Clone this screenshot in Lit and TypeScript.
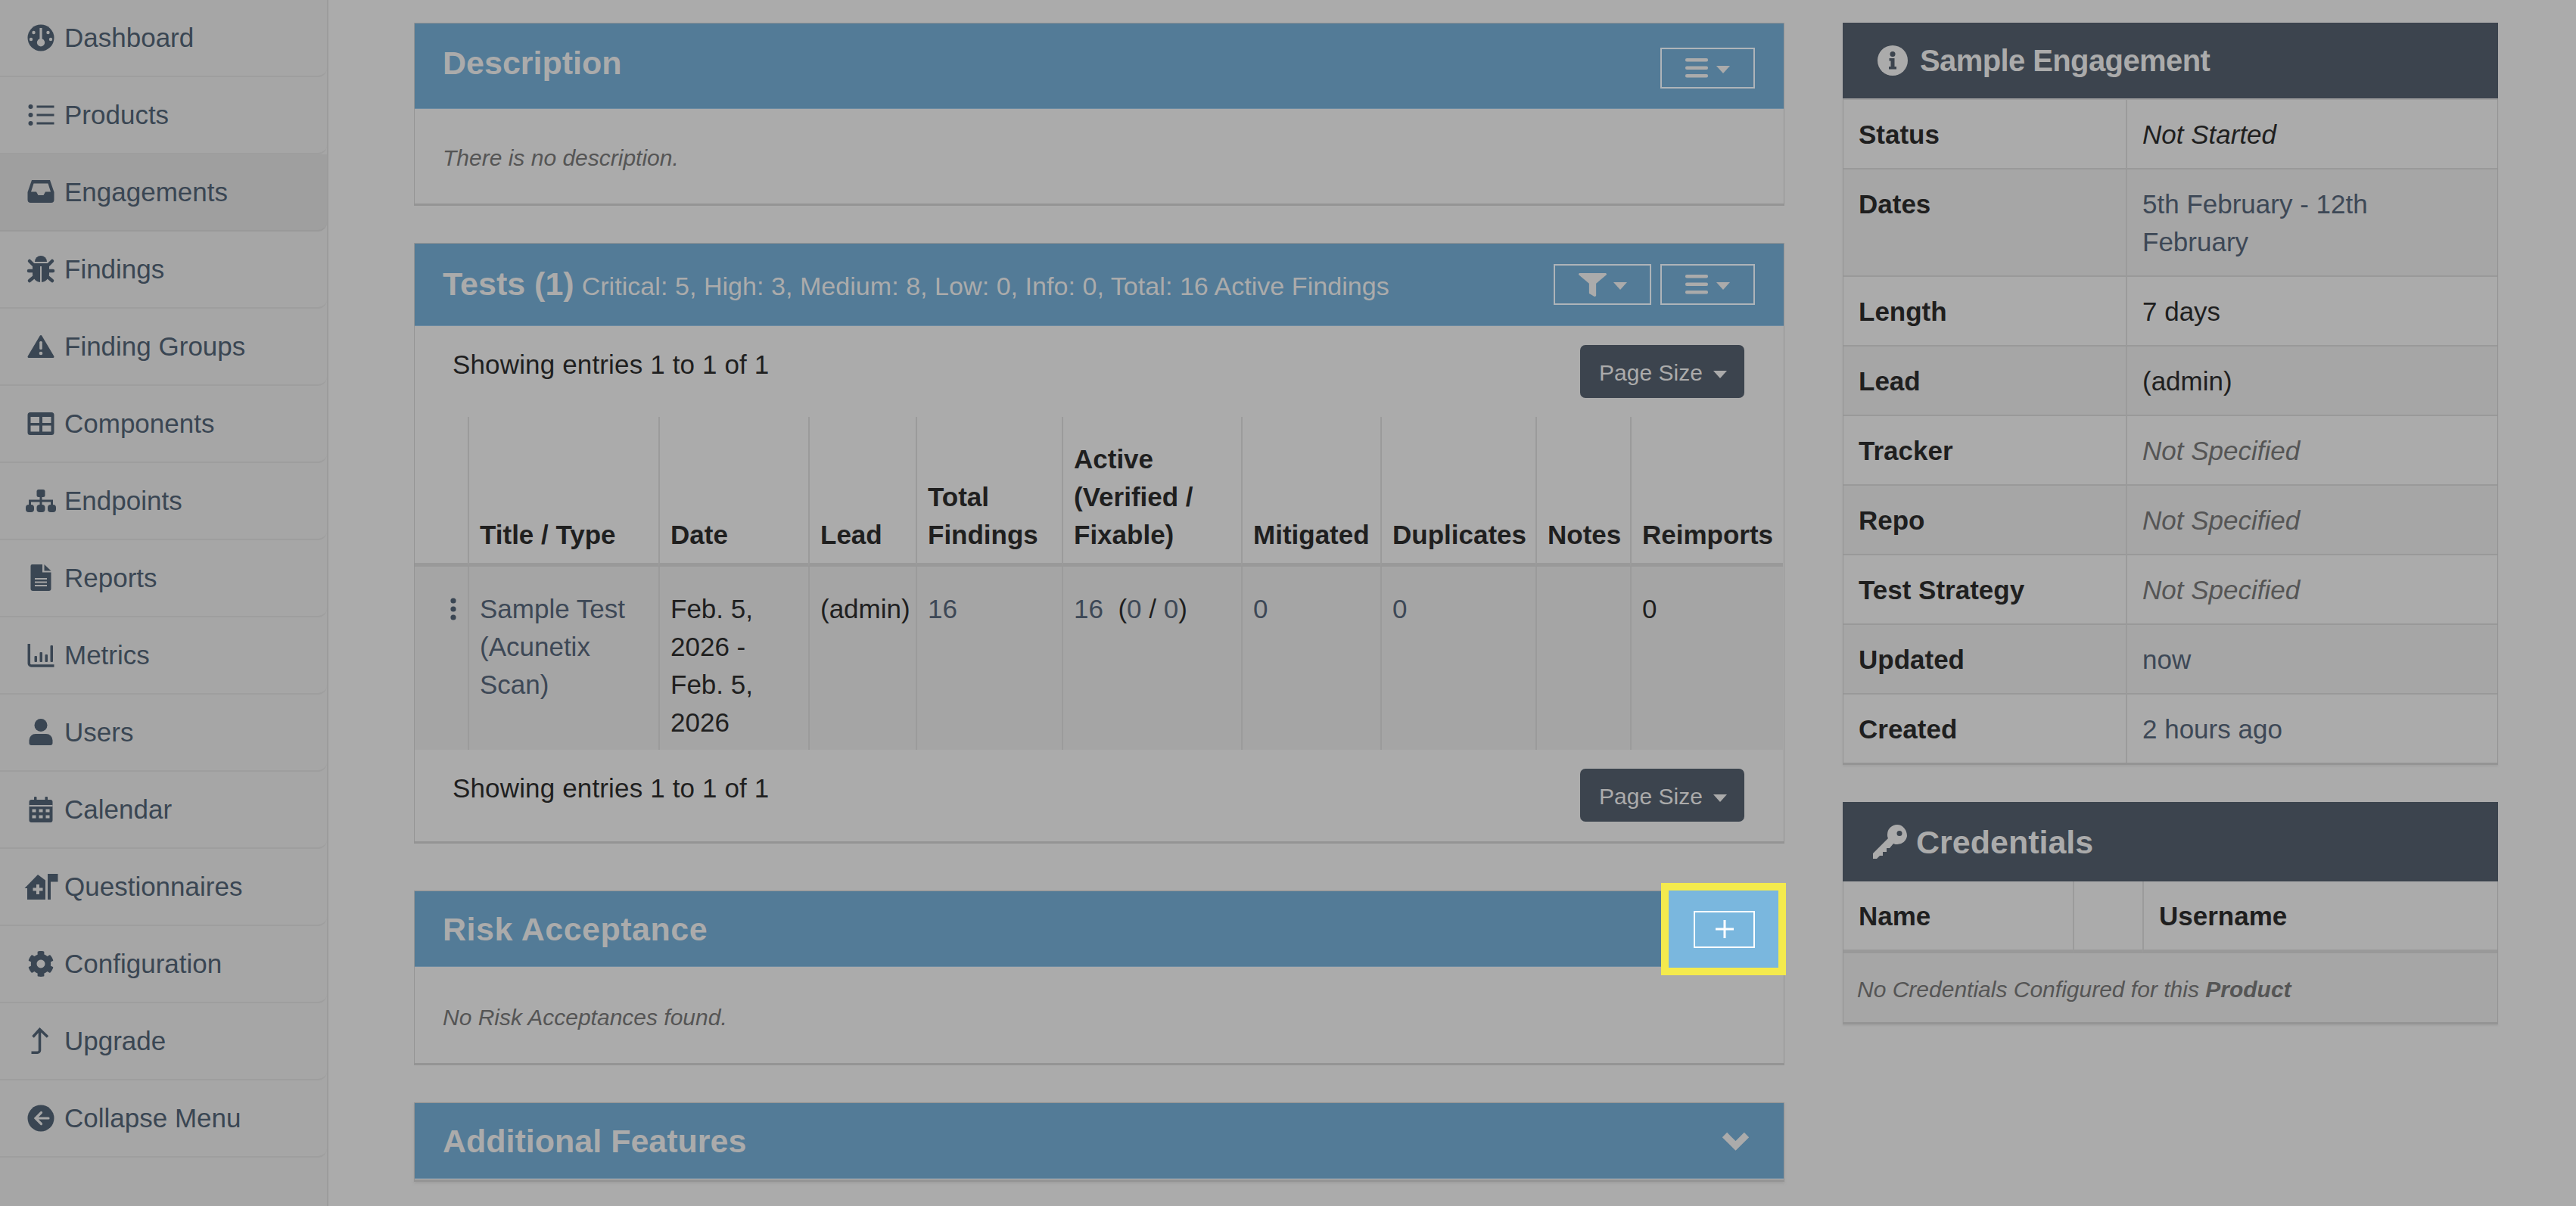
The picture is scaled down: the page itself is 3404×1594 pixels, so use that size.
import { LitElement, html, css, svg } from "lit";
import { customElement } from "lit/decorators.js";

const icons: Record<string, unknown> = {
  Dashboard: svg`<circle cx="22" cy="20" r="17.5"/><path class="h" d="M20.4 7h3.200v14.300a5.200 5.200 0 1 1-3.200 0z"/><circle class="h" cx="12.500" cy="13" r="2.200"/><circle class="h" cx="31.500" cy="13" r="2.200"/><circle class="h" cx="9" cy="22" r="2.200"/><circle class="h" cx="35" cy="22" r="2.200"/>`,
  Products: svg`<circle cx="8.500" cy="9" r="3"/><circle cx="8.500" cy="20" r="3"/><circle cx="8.500" cy="31" r="3"/><rect x="16.500" y="7.500" width="23" height="3"/><rect x="16.500" y="18.500" width="23" height="3"/><rect x="16.500" y="29.500" width="23" height="3"/>`,
  Engagements: svg`<path fill-rule="evenodd" d="M10 4h24l5.500 16v10a4 4 0 0 1-4 4h-27a4 4 0 0 1-4-4V20zM12.500 8.500L9 19.500h7l2.500 4.500h7l2.500-4.500h7L31.500 8.500z"/>`,
  Findings: svg`<path d="M14 10a8 8 0 0 1 16 0z"/><path d="M11 12h22v14a11 11 0 0 1-22 0z"/><rect class="h" x="21" y="16" width="2" height="21"/><path class="s" d="M12 14L7 9M32 14l5-5M12 22H6M32 22h6M13 30l-6 5M31 30l6 5"/>`,
  "Finding Groups": svg`<path stroke="#3a4653" stroke-width="3" stroke-linejoin="round" d="M22 6.500L6 33.500h32z"/><rect class="h" x="20.200" y="13" width="3.600" height="11" rx="1.500"/><circle class="h" cx="22" cy="29" r="2.300"/>`,
  Components: svg`<path fill-rule="evenodd" d="M8 5h28a3.500 3.500 0 0 1 3.500 3.500v23a3.500 3.500 0 0 1-3.500 3.500H8a3.500 3.500 0 0 1-3.500-3.500v-23A3.500 3.500 0 0 1 8 5zM8.500 11v8h11.500v-8zM24 11v8h11.500v-8zM8.500 22.500v8h11.500v-8zM24 22.500v8h11.500v-8z"/>`,
  Endpoints: svg`<rect x="16.500" y="5" width="11" height="10" rx="2.500"/><rect x="2" y="25" width="11" height="10" rx="4"/><rect x="16.500" y="25" width="11" height="10" rx="4"/><rect x="31" y="25" width="11" height="10" rx="4"/><path class="t" d="M22 15v10M7.500 25v-5h29v5"/>`,
  Reports: svg`<path d="M8.500 4a2 2 0 0 1 2-2H24v10.500h11.500V34a3 3 0 0 1-3 3h-21a3 3 0 0 1-3-3z"/><path d="M26.500 2l9 8.500h-9z"/><rect class="h" x="14" y="20" width="16" height="2"/><rect class="h" x="14" y="24.500" width="16" height="2"/><rect class="h" x="14" y="29" width="16" height="2"/>`,
  Metrics: svg`<path class="t w" d="M6.300 5v26a3 3 0 0 0 3 3h30.200"/><rect x="13.500" y="21" width="3.500" height="8" rx="1"/><rect x="20.500" y="16" width="3.500" height="13" rx="1"/><rect x="27.500" y="19" width="3.500" height="10" rx="1"/><rect x="34.500" y="7" width="3.500" height="22" rx="1"/>`,
  Users: svg`<circle cx="22" cy="10.500" r="8.500"/><path d="M15 22h14a8.500 8.500 0 0 1 8.500 8.500v3.500a3 3 0 0 1-3 3h-25a3 3 0 0 1-3-3v-3.500A8.500 8.500 0 0 1 15 22z"/>`,
  Calendar: svg`<path d="M9.500 7h25a3 3 0 0 1 3 3v24a3 3 0 0 1-3 3h-25a3 3 0 0 1-3-3V10a3 3 0 0 1 3-3z"/><rect x="13" y="3" width="3.500" height="7" rx="1"/><rect x="27.500" y="3" width="3.500" height="7" rx="1"/><rect class="h" x="6.500" y="14" width="31" height="2"/><g class="h"><rect x="10.500" y="19.500" width="5" height="4"/><rect x="19.500" y="19.500" width="5" height="4"/><rect x="28.500" y="19.500" width="5" height="4"/><rect x="10.500" y="27.500" width="5" height="4"/><rect x="19.500" y="27.500" width="5" height="4"/><rect x="28.500" y="27.500" width="5" height="4"/></g>`,
  Questionnaires: svg`<path d="M.5 22L18 4l10 7.500V37H4V22z"/><path class="h" d="M16 17h4v4.500h4.500v4H20V30h-4v-4.500h-4.500v-4H16z"/><rect x="31" y="3" width="4" height="34"/><rect x="31" y="3" width="13.500" height="10.500"/>`,
  Configuration: svg`<svg x="4.500" y="2.500" width="35" height="35" viewBox="0 0 512 512"><path d="M487.400 315.700l-42.600-24.600c4.300-23.200 4.300-47 0-70.200l42.600-24.600c4.900-2.800 7.100-8.600 5.500-14-11.100-35.600-30-67.800-54.700-94.600-3.800-4.100-10-5.100-14.800-2.300L380.800 110c-17.900-15.400-38.500-27.300-60.800-35.100V25.800c0-5.600-3.900-10.500-9.400-11.700-36.700-8.200-74.300-7.800-109.200 0-5.500 1.200-9.400 6.100-9.400 11.700V75c-22.200 7.900-42.800 19.800-60.800 35.100L88.700 85.500c-4.900-2.800-11-1.900-14.800 2.300-24.700 26.700-43.600 58.900-54.700 94.600-1.700 5.400.6 11.200 5.500 14L67.300 221c-4.300 23.200-4.300 47 0 70.200l-42.600 24.600c-4.900 2.800-7.100 8.600-5.500 14 11.100 35.600 30 67.800 54.700 94.600 3.800 4.100 10 5.100 14.800 2.300l42.600-24.600c17.900 15.400 38.500 27.300 60.800 35.100v49.200c0 5.600 3.900 10.500 9.400 11.700 36.700 8.200 74.300 7.800 109.200 0 5.500-1.200 9.400-6.100 9.400-11.700v-49.200c22.200-7.900 42.800-19.800 60.800-35.100l42.600 24.600c4.900 2.800 11 1.900 14.800-2.300 24.700-26.700 43.600-58.900 54.700-94.600 1.500-5.500-.7-11.300-5.600-14.100zM256 336c-44.100 0-80-35.900-80-80s35.900-80 80-80 80 35.900 80 80-35.900 80-80 80z"/></svg>`,
  Upgrade: svg`<path class="t w" d="M9.500 35.200h8a3 3 0 0 0 3-3V5M11.500 14.500L20.500 4.500l10.500 10"/>`,
  "Collapse Menu": svg`<circle cx="22" cy="20" r="17.500"/><path class="th" d="M32 20H15.500M22.500 12.500L15 20l7.500 7.500"/>`,
};

const items = Object.keys(icons);

@customElement("app-root")
export class AppRoot extends LitElement {
  static styles = css`
    :host {
      display: grid;
      grid-template-columns: 434px 1fr;
      width: 3404px;
      height: 1594px;
      overflow: hidden;
      background: #ababab;
      font-family: "Liberation Sans", Arial, sans-serif;
      font-size: 35px;
      line-height: 50px;
      color: #1f1f1f;
    }
    .side {
      background: #a6a6a6;
      border-right: 2px solid #9c9c9c;
      box-sizing: border-box;
      height: 1594px;
    }
    .item {
      display: flex;
      align-items: center;
      height: 102px;
      box-sizing: border-box;
      padding-left: 32px;
      border-bottom: 2px solid #9e9e9e;
      border-bottom-right-radius: 12px;
      color: #3a4653;
    }
    .item.on { background: #9f9f9f; border-bottom-color: #999; }
    .item svg { flex: none; margin-right: 9px; overflow: visible; }
    .ic { fill: #3a4653; }
    .ic .h { fill: #a6a6a6; }
    .on .ic .h { fill: #9f9f9f; }
    .ic .s { fill: none; stroke: #3a4653; stroke-width: 4.5; stroke-linecap: round; }
    .ic .t { fill: none; stroke: #3a4653; stroke-width: 3; }
    .ic .t.w { stroke-width: 3.500; }
    .ic .th { fill: none; stroke: #a6a6a6; stroke-width: 3.200; stroke-linecap: round; }

    .main {
      display: grid;
      grid-template-columns: 1811px 866px;
      column-gap: 77px;
      padding: 30px 0 0 113px;
      align-items: start;
    }
    .col { display: flex; flex-direction: column; }

    .panel {
      border: 1px solid #949494;
      border-width: 1px 1px 3px 1px;
      box-sizing: border-box;
    }
    .p1 { height: 242px; }
    .p2 { height: 794px; margin-top: 49px; }
    .p3 { height: 231px; margin-top: 62px; }
    .p4 { height: 105px; margin-top: 49px; box-shadow: 0 2px 3px #9f9f9f; }

    .head {
      display: flex;
      align-items: center;
      background: #537b97;
      border-bottom: 1.5px solid #6a8aa2;
      box-sizing: border-box;
      padding: 0 38px 0 37px;
      color: #ababab;
      position: relative;
    }
    .p1 .head { height: 113px; }
    .p2 .head { height: 109px; }
    .p3 .head, .p4 .head { height: 100px; }
    .title { font-size: 43px; font-weight: bold; white-space: nowrap; }
    .p1 .title { margin-bottom: 9px; }
    .p1 .btns { margin-top: 6px; }
    .p3 .title { letter-spacing: 0.5px; }
    .sub { font-size: 34px; font-weight: normal; margin-left: 10px; letter-spacing: 0.05px; }
    .btns { margin-left: auto; display: flex; gap: 12px; }
    .btn {
      display: flex;
      align-items: center;
      justify-content: center;
      gap: 11px;
      box-sizing: border-box;
      height: 54px;
      width: 125px;
      border: 2px solid #aeb4b9;
      color: #ababab;
      fill: #ababab;
    }
    .btn.f { width: 129px; gap: 9px; }
    .caret {
      width: 0;
      height: 0;
      border-top: 10px solid currentColor;
      border-left: 9.5px solid transparent;
      border-right: 9.5px solid transparent;
      margin-top: 4px;
    }
    .note { font-size: 30px; font-style: italic; color: #555; padding: 42px 37px 0; line-height: 50px; }
    .p1 .note { padding-top: 40px; }

    .bar { display: flex; justify-content: space-between; align-items: flex-start; padding: 25px 52px 25px 50px; }
    .bar .txt { margin-top: 1px; letter-spacing: 0.15px; }
    .ps {
      display: flex;
      align-items: center;
      justify-content: center;
      gap: 14px;
      box-sizing: border-box;
      width: 217px;
      height: 70px;
      padding: 3px 0 0 2px;
      border-radius: 7px;
      background: #3c444e;
      color: #ababab;
      font-size: 30px;
    }

    table { border-collapse: separate; border-spacing: 0; table-layout: fixed; }
    .tests { width: 1808px; }
    .tests th {
      height: 198px;
      box-sizing: border-box;
      vertical-align: bottom;
      text-align: left;
      padding: 0 4px 12px 14px;
      border-left: 2px solid #9b9b9b;
      border-bottom: 5px solid #999;
    }
    .tests td {
      vertical-align: top;
      padding: 31px 4px 11px 14px;
      border-left: 2px solid #9b9b9b;
      background: #a5a5a5;
    }
    .tests th:first-child, .tests td:first-child { border-left: 0; padding: 0; }
    .dots { display: block; margin: 41px 0 0 47px; fill: #3a4653; }
    .a { color: #3d4856; }

    .dark { background: #3c444e; color: #ababab; display: flex; align-items: center; box-sizing: border-box; }
    .d1 { height: 100px; padding-left: 46px; gap: 16px; }
    .d1 span { font-size: 40px; font-weight: bold; letter-spacing: -0.6px; }
    .d2 { height: 105px; padding-left: 40px; gap: 12px; margin-top: 49px; }
    .d2 span { font-size: 43px; font-weight: bold; }
    .box { border: 1px solid #949494; border-top: 0; border-bottom-width: 3px; box-shadow: 0 2px 2px #a2a2a2; }
    .info { width: 100%; box-sizing: border-box; border-top: 2px solid #9d9d9d; }
    .info th, .info td {
      text-align: left;
      vertical-align: top;
      padding: 21px 20px 19px 20px;
      border-bottom: 2px solid #999;
      font-weight: normal;
    }
    .info tr:last-child th, .info tr:last-child td { border-bottom: 0; }
    .info th { font-weight: bold; }
    .info td { border-left: 2px solid #9b9b9b; }
    .info tr:nth-child(odd) th, .info tr:nth-child(odd) td { background: #a6a6a6; }
    .ns { color: #555; font-style: italic; }
    .ni { font-style: italic; }
    .cred { width: 100%; }
    .cred th {
      text-align: left;
      padding: 21px 20px 19px;
      height: 90px;
      box-sizing: border-box;
      border-left: 2px solid #9b9b9b;
      border-bottom: 5px solid #999;
    }
    .cred th:first-child { border-left: 0; }
    .cred td { font-size: 30px; font-style: italic; color: #555; padding: 23px 18px 18px; background: #a6a6a6; }

    .spot {
      position: absolute;
      top: -11px;
      right: -3px;
      width: 165px;
      height: 122px;
      box-sizing: border-box;
      border: 10px solid #f4ea4d;
      background: #7ab7de;
      display: flex;
      align-items: center;
      justify-content: center;
    }
    .plus {
      width: 81px;
      height: 49px;
      margin-left: 2px;
      box-sizing: border-box;
      border: 2px solid #fff;
      display: flex;
      align-items: center;
      justify-content: center;
    }
    .chev { margin-left: auto; margin-right: 5px; }
  `;

  private bars() {
    return html`<svg width="30" height="26" viewBox="0 0 30 26"><rect width="30" height="4.500" rx="2"/><rect y="10.500" width="30" height="4.500" rx="2"/><rect y="21" width="30" height="4.500" rx="2"/></svg><span class="caret"></span>`;
  }

  private bar() {
    return html`<div class="bar"><div class="txt">Showing entries 1 to 1 of 1</div><div class="ps">Page Size <span class="caret"></span></div></div>`;
  }

  render() {
    const cols = [70, 252, 198, 142, 193, 237, 184, 205, 125, 202];
    const rows: [string, unknown][] = [
      ["Status", html`<span class="ni">Not Started</span>`],
      ["Dates", html`<span class="a">5th February - 12th<br />February</span>`],
      ["Length", "7 days"],
      ["Lead", "(admin)"],
      ["Tracker", html`<span class="ns">Not Specified</span>`],
      ["Repo", html`<span class="ns">Not Specified</span>`],
      ["Test Strategy", html`<span class="ns">Not Specified</span>`],
      ["Updated", html`<span class="a">now</span>`],
      ["Created", html`<span class="a">2 hours ago</span>`],
    ];
    return html`
      <nav class="side">
        ${items.map(
          (n) => html`<div class="item ${n === "Engagements" ? "on" : ""}">
            <svg class="ic" width="44" height="40" viewBox="0 0 44 40">${icons[n]}</svg>${n}
          </div>`
        )}
      </nav>
      <main class="main">
        <div class="col">
          <section class="panel p1">
            <div class="head"><div class="title">Description</div><div class="btns"><div class="btn">${this.bars()}</div></div></div>
            <div class="note">There is no description.</div>
          </section>
          <section class="panel p2">
            <div class="head">
              <div class="title">Tests (1)<span class="sub">Critical: 5, High: 3, Medium: 8, Low: 0, Info: 0, Total: 16 Active Findings</span></div>
              <div class="btns">
                <div class="btn f">
                  <svg width="37" height="31" viewBox="0 0 512 512" preserveAspectRatio="none"><path d="M487.976 0H24.028C2.71 0-8.047 25.866 7.058 40.971L192 225.941V432c0 7.831 3.821 15.17 10.237 19.662l80 55.98C298.02 518.69 320 507.493 320 487.98V225.941l184.947-184.97C520.021 25.896 509.338 0 487.976 0z"/></svg><span class="caret"></span>
                </div>
                <div class="btn">${this.bars()}</div>
              </div>
            </div>
            ${this.bar()}
            <table class="tests">
              <colgroup>${cols.map((w) => html`<col style="width:${w}px" />`)}</colgroup>
              <thead><tr>
                <th></th><th>Title / Type</th><th>Date</th><th>Lead</th><th>Total Findings</th><th>Active (Verified / Fixable)</th><th>Mitigated</th><th>Duplicates</th><th>Notes</th><th>Reimports</th>
              </tr></thead>
              <tbody><tr>
                <td><svg class="dots" width="8" height="30" viewBox="0 0 8 30"><circle cx="4" cy="4" r="3.600"/><circle cx="4" cy="15" r="3.600"/><circle cx="4" cy="26" r="3.600"/></svg></td>
                <td><span class="a">Sample Test<br />(Acunetix<br />Scan)</span></td>
                <td>Feb. 5,<br />2026 -<br />Feb. 5,<br />2026</td>
                <td>(admin)</td>
                <td><span class="a">16</span></td>
                <td><span class="a">16</span>&nbsp; (<span class="a">0</span> / <span class="a">0</span>)</td>
                <td><span class="a">0</span></td>
                <td><span class="a">0</span></td>
                <td></td>
                <td>0</td>
              </tr></tbody>
            </table>
            ${this.bar()}
          </section>
          <section class="panel p3">
            <div class="head">
              <div class="title">Risk Acceptance</div>
              <div class="spot"><div class="plus"><svg width="24" height="24" viewBox="0 0 24 24"><path d="M0 12h24M12 0v24" stroke="#fff" stroke-width="3" fill="none"/></svg></div></div>
            </div>
            <div class="note">No Risk Acceptances found.</div>
          </section>
          <section class="panel p4">
            <div class="head">
              <div class="title">Additional Features</div>
              <svg class="chev" width="41" height="28" viewBox="0 0 41 28"><path d="M6 6l14.500 14.500L35 6" fill="none" stroke="#ababab" stroke-width="9"/></svg>
            </div>
          </section>
        </div>
        <div class="col">
          <div class="dark d1">
            <svg width="40" height="40" viewBox="0 0 40 40"><path fill="#ababab" d="M20 0a20 20 0 1 1 0 40a20 20 0 0 1 0-40z"/><circle cx="20" cy="11.500" r="3.500" fill="#3c444e"/><path fill="#3c444e" d="M15.500 17h7v11h2.500v3.500H15V28h2.500v-7.500h-2z"/></svg>
            <span>Sample Engagement</span>
          </div>
          <div class="box">
            <table class="info">
              <colgroup><col style="width:373px" /><col /></colgroup>
              ${rows.map(([k, v]) => html`<tr><th>${k}</th><td>${v}</td></tr>`)}
            </table>
          </div>
          <div class="dark d2">
            <svg width="45" height="45" viewBox="0 0 45 45"><path fill="#ababab" fill-rule="evenodd" d="M32 0a13 15 0 0 1 13 15a13 13 0 0 1-13 11c-2 0-3 0-5-1l-5 6h-4v5h-5v5H9l-4 4H0v-7L20 18c-1-2-1-3-1-5A13 13 0 0 1 32 0zM35 8a3.500 3.500 0 1 0 0 7a3.500 3.500 0 0 0 0-7z"/></svg>
            <span>Credentials</span>
          </div>
          <div class="box">
            <table class="cred">
              <colgroup><col style="width:303px" /><col style="width:92px" /><col /></colgroup>
              <tr><th>Name</th><th></th><th>Username</th></tr>
              <tr><td colspan="3">No Credentials Configured for this <b>Product</b></td></tr>
            </table>
          </div>
        </div>
      </main>
    `;
  }
}
